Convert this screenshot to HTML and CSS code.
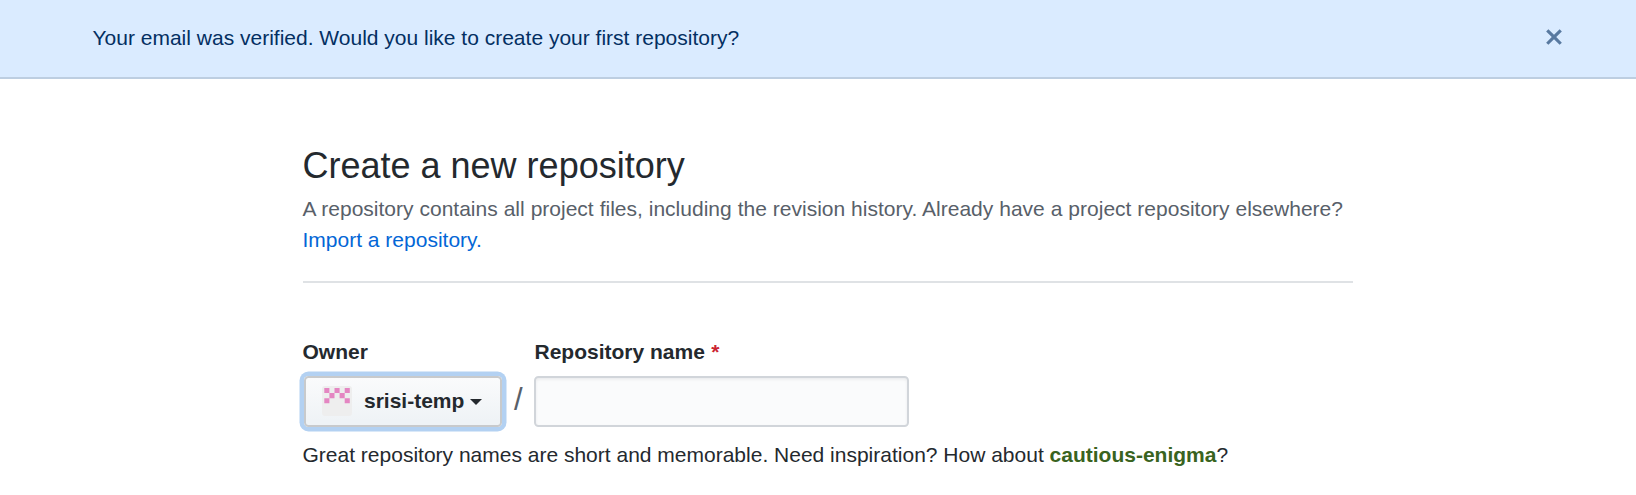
FILE: index.html
```html
<!DOCTYPE html>
<html lang="en">
<head>
<meta charset="utf-8">
<title>Create a new repository</title>
<link rel="stylesheet" href="styles.css">
</head>
<body>
<div class="flash">
  <span>Your email was verified. Would you like to create your first repository?</span>
  <button class="flash-close" type="button" aria-label="Dismiss">
    <svg width="18" height="24" viewBox="0 0 12 16"><path d="M7.48 8l3.75 3.75-1.48 1.48L6 9.48l-3.75 3.75-1.48-1.48L4.52 8 .77 4.25l1.48-1.48L6 6.52l3.75-3.75 1.48 1.48L7.48 8z"/></svg>
  </button>
</div>
<main class="container">
  <header class="subhead">
    <h1>Create a new repository</h1>
    <p>A repository contains all project files, including the revision history. Already have a project repository elsewhere? <a href="#">Import a repository.</a></p>
  </header>
  <form>
    <div class="fields">
      <div class="field">
        <span class="label">Owner</span>
        <button class="owner" type="button">
          <svg class="avatar" width="30" height="30" viewBox="0 0 30 30"><rect width="30" height="30" rx="3" fill="#eee"/><path fill="#e486c2" d="M2.3 2h5.1v5.1H2.3zM12.5 2h5.1v5.1h-5.1zM22.7 2h5.1v5.1h-5.1zM7.4 7.1h5.1v5.1H7.4zM17.6 7.1h5.1v5.1h-5.1zM2.3 12.2h5.1v5.1H2.3zM22.7 12.2h5.1v5.1h-5.1z"/></svg>
          <span class="owner-name">srisi-temp</span>
          <span class="caret"></span>
        </button>
      </div>
      <span class="slash">/</span>
      <div class="field">
        <label class="label" for="name">Repository name <span class="required">*</span></label>
        <input class="name" id="name" type="text">
      </div>
    </div>
    <p class="hint">Great repository names are short and memorable. Need inspiration? How about <strong>cautious-enigma</strong>?</p>
  </form>
</main>
</body>
</html>
```
FILE: styles.css
```css
* { box-sizing: border-box; }
body {
  margin: 0;
  background: #fff;
  color: #24292e;
  font: 21px/31.5px "Liberation Sans", Arial, sans-serif;
  overflow: hidden;
}
h1, p { margin: 0; }
.flash {
  display: flex;
  justify-content: space-between;
  align-items: center;
  height: 79px;
  padding: 0 73px 2px 92.5px;
  color: #032f62;
  background: #daebff;
  border-bottom: 2px solid #bdcee1;
}
.flash-close {
  display: flex;
  padding: 0 0 1px;
  border: 0;
  background: none;
}
.flash-close svg { fill: #032f62; opacity: .6; }
.container {
  width: 1050px;
  margin: 59.5px 0 0 302.5px;
}
.subhead {
  height: 144.5px;
  border-bottom: 2px solid #dfe2e5;
}
.subhead h1 { font-size: 36px; line-height: 54px; font-weight: 400; }
.subhead p { color: #586069; word-spacing: .13px; }
.subhead a { color: #0366d6; text-decoration: none; word-spacing: 0; }
.fields { display: flex; padding-top: 53px; }
.field { display: flex; flex-direction: column; gap: 8.5px; }
.label { font-weight: 700; }
.field:last-child .label { padding-left: .5px; }
.required { color: #cb2431; margin-left: .5px; }
.owner {
  display: flex;
  align-items: center;
  width: 198.5px;
  height: 51px;
  margin-left: 1px;
  padding: 0 0 1px 16.5px;
  color: #24292e;
  font: inherit;
  font-weight: 700;
  white-space: nowrap;
  background: linear-gradient(#fafbfc, #eff3f6 90%);
  border: 2px solid #c8cacc;
  border-radius: 4.5px;
  box-shadow: 0 0 0 4.5px #b3d1f2;
}
.avatar { flex: none; }
.owner-name { margin: -1px 6px 0 12px; }
.caret {
  margin-top: 1px;
  border: 6px solid transparent;
  border-top-color: #24292e;
  border-bottom: 0;
}
.slash {
  width: 32px;
  padding: 48px 0 0 12px;
  color: #586069;
  font-size: 31px;
}
.name {
  width: 375px;
  height: 51px;
  padding: 9px 12px;
  font: inherit;
  background: #fafbfc;
  border: 2px solid #d1d5da;
  border-radius: 4.5px;
  box-shadow: inset 0 1.5px 3px rgba(27, 31, 35, .075);
}
.hint { margin-top: 12px; }
.hint strong { color: #396320; }
```
